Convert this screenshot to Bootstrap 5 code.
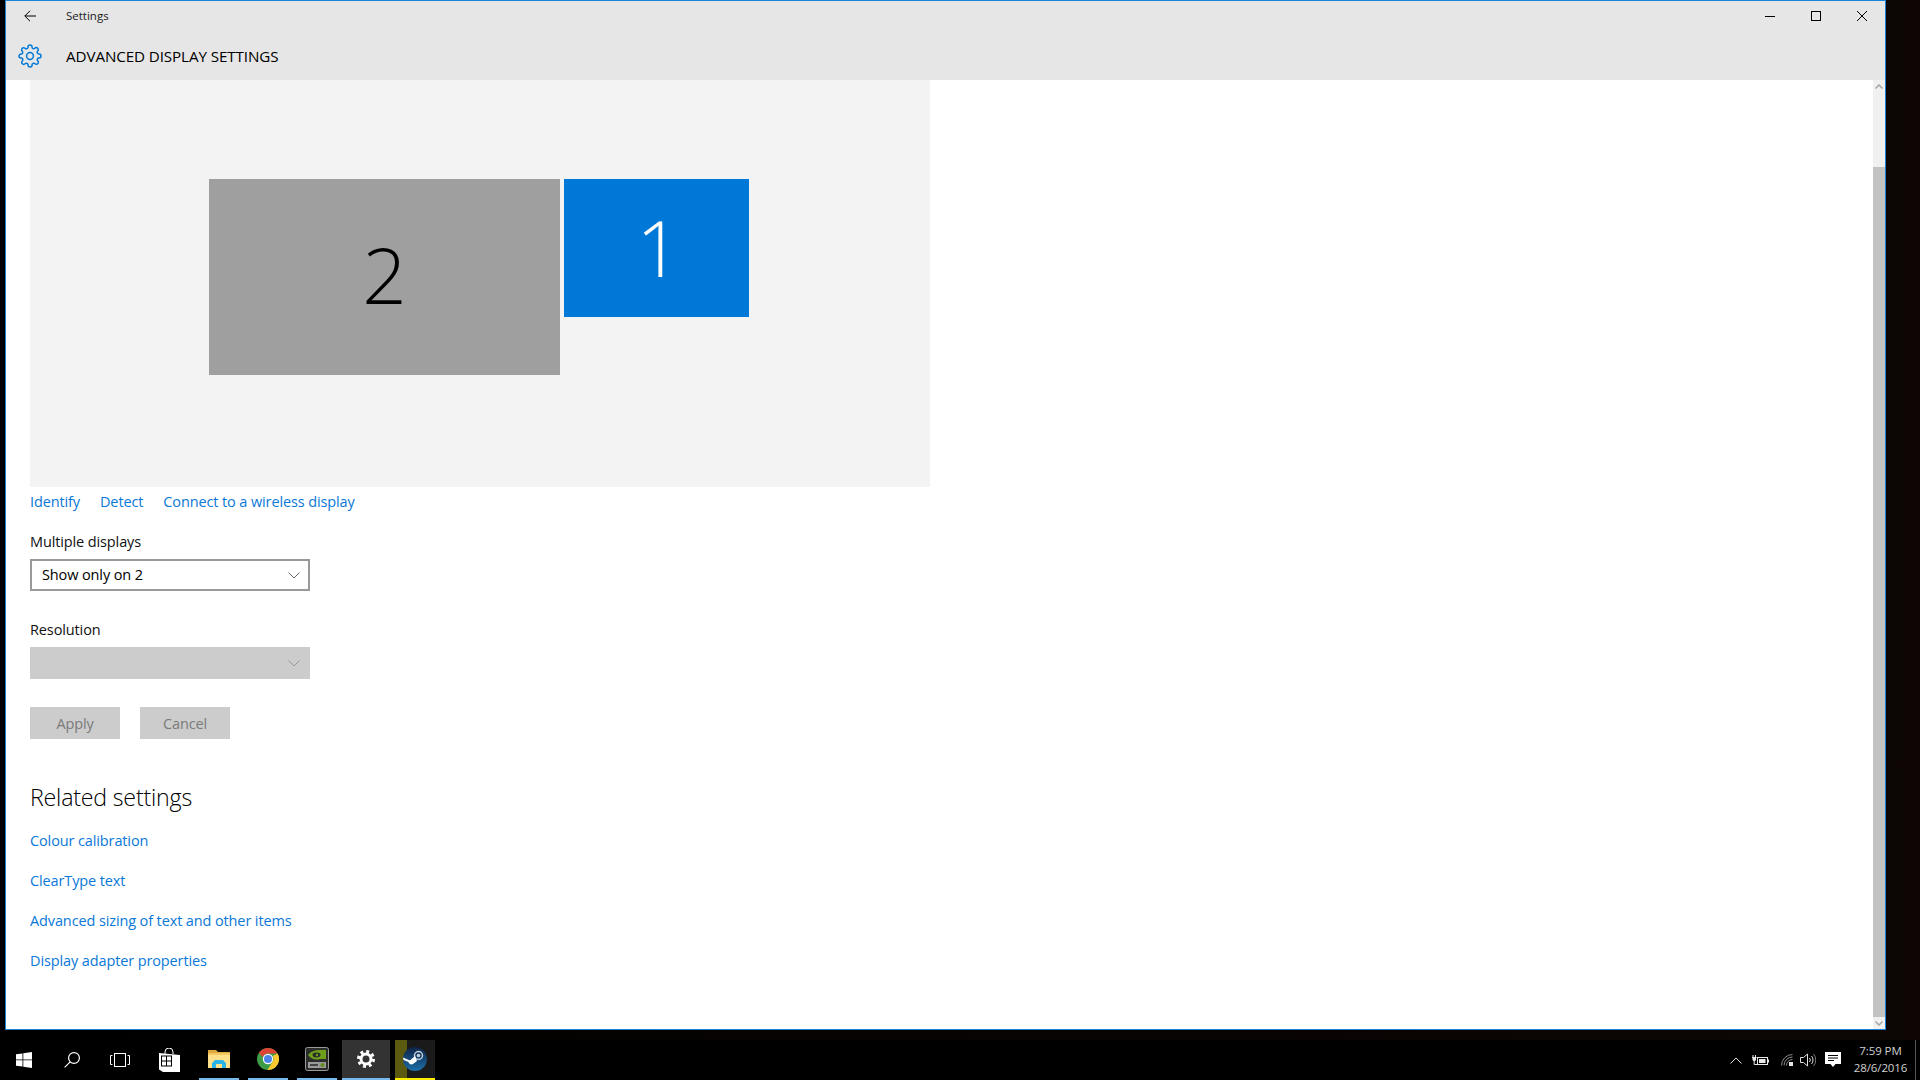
<!DOCTYPE html>
<html lang="en">
<head>
  <meta charset="UTF-8" />
  <meta name="viewport" content="width=device-width, initial-scale=1" />
  <title>Settings</title>
  <link href="https://cdn.jsdelivr.net/npm/bootstrap@5.3.3/dist/css/bootstrap.min.css" rel="stylesheet" />
  <style>
    html, body { height: 100%; }
    body { background: linear-gradient(90deg, #000 0, #060302 40%, #0d0604 100%); overflow: hidden; font-family: "Open Sans", "Liberation Sans", sans-serif; font-size: 14.5px; color: #111; }
    svg { display: block; }
    .screen { width: 1920px; height: 1080px; }
    .app-window { width: 1881px; height: 1030px; margin-left: 5px; background: #fff; border: 1px solid #1883d7; overflow: hidden; }

    .title-bar { height: 79px; background: #e6e6e6; flex: none; }
    .title-top { height: 29px; }
    .title-bottom { height: 50px; padding-top: 2px; }
    .back-slot { width: 60px; padding-left: 18px; }
    .app-name { font-size: 11.5px; color: #1a1a1a; }
    .page-name { font-size: 15.2px; font-weight: 500; letter-spacing: -.1px; color: #000; }
    .gear-slot { width: 60px; padding-left: 12px; }
    .win-btn { width: 46px; height: 29px; }

    .scroll-track { width: 12px; background: #f0f0f0; flex: none; }
    .scroll-cap { height: 12px; flex: none; }
    .scroll-gap { height: 75px; flex: none; }
    .scroll-thumb { background: #c2c2c2; flex: 1; }

    .page-body { padding-left: 24px; }
    .preview { width: 900px; height: 407px; background: #f3f3f3; padding: 99px 0 0 179px; gap: 4px; }
    .monitor { font-weight: 300; font-size: 78px; line-height: 1; }
    .mon-two { width: 351px; height: 196px; background: #9f9f9f; color: #000; padding-bottom: 6px; }
    .mon-one { width: 185px; height: 138px; background: #0078d7; color: #fff; padding: 0 0 2px 4px; }

    .link-row { height: 30px; gap: 20px; }
    .ms-link { color: #0a78d7; text-decoration: none; letter-spacing: -.12px; }
    .field-label { height: 24px; margin-bottom: 6px; margin-top: 12px; padding-top: 2px; letter-spacing: -.12px; }
    .field-label.second { margin-top: 27px; margin-bottom: 5px; padding-top: 0; }
    .combo { width: 280px; height: 32px; padding: 0 8px 0 10px; border: 2px solid #999; background: #fff; letter-spacing: -.12px; color: #000; }
    .combo.off { border-color: #ccc; background: #ccc; }
    .action-row { margin-top: 28px; gap: 20px; }
    .flat-btn, .flat-btn:disabled { width: 90px; height: 32px; padding: 1px 0 0; background: #ccc; color: #7a7a7a; border: 0; opacity: 1; font-size: 14.5px; letter-spacing: -.12px; }
    .section-title { font-size: 23.2px; font-weight: 300; height: 34px; line-height: 34px; margin: 41px 0 7px; color: #000; letter-spacing: -.2px; }
    .related-row { height: 40px; }

    .task-bar { height: 40px; background: #000; margin-top: auto; flex: none; }
    .tb-slot { width: 48px; height: 40px; }
    .tb-store { width: 50px; }
    .tb-app { width: 40px; height: 40px; border-bottom: 2px solid #76b9ed; flex: none; }
    .tb-explorer { margin-left: 5px; }
    .tb-chrome { margin-left: 9px; }
    .tb-nvidia { margin-left: 9px; }
    .tb-settings { margin-left: 5px; width: 48px; background: #333; }
    .tb-steam { margin-left: 5px; background: linear-gradient(90deg, #5c5a10 0, #5c5a10 12px, #1a1a1a 12px); border-bottom-color: #ffee00; }
    .tray-slot { height: 40px; flex: none; }
    .clock { width: 67px; color: #d0d0d0; font-size: 11.5px; line-height: 17px; text-align: center; letter-spacing: -.1px; padding: 0 2px 2px 0; }
    .show-desktop { width: 5px; height: 40px; border-left: 1px solid #555; }
  </style>
</head>
<body>
  <div class="screen d-flex flex-column">

    <!-- Settings window -->
    <div class="app-window d-flex flex-column">
      <div class="title-bar">
        <div class="title-top d-flex align-items-center">
          <div class="back-slot">
            <svg width="12" height="12" viewBox="0 0 12 12" fill="none" stroke="#000" stroke-width="1"><path d="M12 6H.8M6 .8 .8 6 6 11.2"/></svg>
          </div>
          <span class="app-name">Settings</span>
          <div class="ms-auto d-flex">
            <div class="win-btn d-flex align-items-center justify-content-center">
              <svg width="10" height="10" viewBox="0 0 10 10" stroke="#000" stroke-width="1"><path d="M0 5.500h10"/></svg>
            </div>
            <div class="win-btn d-flex align-items-center justify-content-center">
              <svg width="10" height="10" viewBox="0 0 10 10" fill="none" stroke="#000" stroke-width="1"><rect x=".5" y=".5" width="9" height="9"/></svg>
            </div>
            <div class="win-btn d-flex align-items-center justify-content-center">
              <svg width="10" height="10" viewBox="0 0 10 10" stroke="#000" stroke-width="1"><path d="M0 0l10 10M10 0 0 10"/></svg>
            </div>
          </div>
        </div>
        <div class="title-bottom d-flex align-items-center">
          <div class="gear-slot">
            <svg width="24" height="24" viewBox="0 0 24 24" fill="none" stroke="#0078d7" stroke-width="1.5"><circle cx="12" cy="12" r="3.400"/><path d="M19.400 15a1.650 1.650 0 0 0 .33 1.820l.06.06a2 2 0 0 1 0 2.830 2 2 0 0 1-2.830 0l-.06-.06a1.650 1.650 0 0 0-1.820-.33 1.650 1.650 0 0 0-1 1.510V21a2 2 0 0 1-2 2 2 2 0 0 1-2-2v-.09A1.650 1.650 0 0 0 9 19.400a1.650 1.650 0 0 0-1.820.33l-.06.06a2 2 0 0 1-2.830 0 2 2 0 0 1 0-2.830l.06-.06a1.650 1.650 0 0 0 .33-1.820 1.650 1.650 0 0 0-1.510-1H3a2 2 0 0 1-2-2 2 2 0 0 1 2-2h.09A1.650 1.650 0 0 0 4.600 9a1.650 1.650 0 0 0-.33-1.820l-.06-.06a2 2 0 0 1 0-2.830 2 2 0 0 1 2.830 0l.06.06a1.650 1.650 0 0 0 1.820.33H9a1.650 1.650 0 0 0 1-1.510V3a2 2 0 0 1 2-2 2 2 0 0 1 2 2v.09a1.650 1.650 0 0 0 1 1.510 1.650 1.650 0 0 0 1.820-.33l.06-.06a2 2 0 0 1 2.830 0 2 2 0 0 1 0 2.830l-.06.06a1.650 1.650 0 0 0-.33 1.820V9a1.650 1.650 0 0 0 1.510 1H21a2 2 0 0 1 2 2 2 2 0 0 1-2 2h-.09a1.650 1.650 0 0 0-1.510 1z"/></svg>
          </div>
          <span class="page-name">ADVANCED DISPLAY SETTINGS</span>
        </div>
      </div>

      <div class="d-flex flex-grow-1 overflow-hidden">
        <div class="page-body flex-grow-1">
          <div class="preview d-flex align-items-start">
            <div class="monitor mon-two d-flex align-items-center justify-content-center">2</div>
            <div class="monitor mon-one d-flex align-items-center justify-content-center">1</div>
          </div>

          <div class="link-row d-flex align-items-center">
            <a class="ms-link" href="#">Identify</a>
            <a class="ms-link" href="#">Detect</a>
            <a class="ms-link" href="#">Connect to a wireless display</a>
          </div>

          <div class="field-label d-flex align-items-center">Multiple displays</div>
          <div class="combo d-flex align-items-center justify-content-between">
            <span>Show only on 2</span>
            <svg width="12" height="7" viewBox="0 0 12 7" fill="none" stroke="#666" stroke-width="1"><path d="M.5.5 6 6l5.500-5.500"/></svg>
          </div>

          <div class="field-label second d-flex align-items-center">Resolution</div>
          <div class="combo off d-flex align-items-center justify-content-end">
            <svg width="12" height="7" viewBox="0 0 12 7" fill="none" stroke="#999" stroke-width="1"><path d="M.5.5 6 6l5.500-5.500"/></svg>
          </div>

          <div class="action-row d-flex">
            <button class="btn rounded-0 flat-btn" disabled>Apply</button>
            <button class="btn rounded-0 flat-btn" disabled>Cancel</button>
          </div>

          <h2 class="section-title">Related settings</h2>
          <div class="related-row d-flex align-items-center"><a class="ms-link" href="#">Colour calibration</a></div>
          <div class="related-row d-flex align-items-center"><a class="ms-link" href="#">ClearType text</a></div>
          <div class="related-row d-flex align-items-center"><a class="ms-link" href="#">Advanced sizing of text and other items</a></div>
          <div class="related-row d-flex align-items-center"><a class="ms-link" href="#">Display adapter properties</a></div>
        </div>

        <div class="scroll-track d-flex flex-column">
          <div class="scroll-cap d-flex align-items-center justify-content-center">
            <svg width="8" height="5" viewBox="0 0 8 5" fill="none" stroke="#a6a6a6" stroke-width="1.5"><path d="M.5 4.500 4 1l3.500 3.500"/></svg>
          </div>
          <div class="scroll-gap"></div>
          <div class="scroll-thumb"></div>
          <div class="scroll-cap d-flex align-items-center justify-content-center">
            <svg width="8" height="5" viewBox="0 0 8 5" fill="none" stroke="#a6a6a6" stroke-width="1.5"><path d="M.5.5 4 4 7.500.5"/></svg>
          </div>
        </div>
      </div>
    </div>

    <!-- Taskbar -->
    <div class="task-bar d-flex">
      <div class="tb-slot d-flex align-items-center justify-content-center">
        <svg width="16" height="16" viewBox="0 0 16 16" fill="#fff"><path d="M0 2.300 6.500 1.400V7.500H0zM7.300 1.300 16 0V7.500H7.300zM0 8.300H6.500V14.600L0 13.700zM7.300 8.300H16V16L7.300 14.700z"/></svg>
      </div>
      <div class="tb-slot d-flex align-items-center justify-content-center">
        <svg width="16" height="16" viewBox="0 0 16 16" fill="none" stroke="#fff" stroke-width="1.200"><circle cx="10" cy="6" r="5.400"/><path d="M6.200 9.800.6 15.400"/></svg>
      </div>
      <div class="tb-slot d-flex align-items-center justify-content-center">
        <svg width="20" height="14" viewBox="0 0 20 14" fill="none" stroke="#fff" stroke-width="1"><rect x="4.500" y=".5" width="11" height="13"/><path d="M2.500 2.500H.5v9h2M17.500 2.500h2v9h-2"/></svg>
      </div>
      <div class="tb-slot tb-store d-flex align-items-center justify-content-center">
        <svg width="21" height="24" viewBox="0 0 21 24"><path fill="none" stroke="#fff" stroke-width="1" d="M6 6V4a4 4 0 0 1 8 0v2"/><path fill="#fff" d="M0 5 21 7v17H4L0 21.500z"/><path fill="#000" d="M2 7.500h11v11H2z"/><path fill="#fff" d="M3 8.500h4v4H3zM8 8.500h4v4H8zM3 13.500h4v4H3zM8 13.500h4v4H8z"/></svg>
      </div>
      <div class="tb-app tb-explorer d-flex align-items-center justify-content-center">
        <svg width="22" height="18" viewBox="0 0 22 18"><path fill="#e0a93f" d="M0 0h8l2 2h12v3H0z"/><path fill="#ffe08a" d="M0 3h22v15H0z"/><path fill="#f2c860" d="M0 3h22v2H0z"/><path fill="#2ab3e6" d="M4 18v-5l3-3h8l3 3v5h-4v-4H8v4z"/></svg>
      </div>
      <div class="tb-app tb-chrome d-flex align-items-center justify-content-center">
        <svg width="22" height="22" viewBox="0 0 22 22">
          <circle cx="11" cy="11" r="11" fill="#3f9c46"/>
          <path fill="#dd4235" d="M2 4.700A11 11 0 0 1 20.500 5.500H11a5.500 5.500 0 0 0-5.200 3.700z"/>
          <path fill="#fbc92f" d="M20.500 5.500A11 11 0 0 1 10.500 22l4.600-7.400a5.500 5.500 0 0 0 .6-6.600z"/>
          <circle cx="11" cy="11" r="5.200" fill="#fff"/>
          <circle cx="11" cy="11" r="4" fill="#4a84e8"/>
        </svg>
      </div>
      <div class="tb-app tb-nvidia d-flex align-items-center justify-content-center">
        <svg width="24" height="24" viewBox="0 0 24 24">
          <rect x=".5" y=".5" width="23" height="23" rx="2" fill="#2a2d2a" stroke="#9a9a9a"/>
          <path fill="#6f9e1a" d="M3 8c3-4 8-5 12-5h6v9h-6c-4 1-8 1-12-4z"/>
          <ellipse cx="11.500" cy="8" rx="4" ry="2.400" fill="#2a2d2a"/>
          <circle cx="12" cy="8" r="1.200" fill="#6f9e1a"/>
          <rect x="3" y="15" width="18" height="6" fill="#9a9a9a"/>
          <rect x="5" y="17" width="8" height="2" fill="#444"/>
          <circle cx="17.500" cy="18" r="2" fill="#5f8f1a"/>
        </svg>
      </div>
      <div class="tb-app tb-settings d-flex align-items-center justify-content-center">
        <svg width="18" height="18" viewBox="0 0 18 18" fill="none" stroke="#fff"><circle cx="9" cy="9" r="5" stroke-width="3"/><circle cx="9" cy="9" r="7.500" stroke-width="3" stroke-dasharray="2.950 2.940"/></svg>
      </div>
      <div class="tb-app tb-steam d-flex align-items-center justify-content-center">
        <svg width="24" height="24" viewBox="0 0 24 24">
          <defs><linearGradient id="steamFill" x1="0" y1="0" x2="0" y2="1"><stop offset="0" stop-color="#0f2247"/><stop offset="1" stop-color="#1c6fa8"/></linearGradient></defs>
          <circle cx="12" cy="12" r="12" fill="url(#steamFill)"/>
          <circle cx="15.500" cy="8.500" r="4" fill="none" stroke="#c4ccd4" stroke-width="1.500"/>
          <circle cx="15.500" cy="8.500" r="1.800" fill="#c4ccd4"/>
          <path fill="#fff" d="M0 10.500l7 3 5-4.500 2 5-4 3c-2 1-4 0-4.500-2L.5 13z"/>
        </svg>
      </div>

      <div class="ms-auto d-flex">
        <div class="tray-slot d-flex align-items-center justify-content-center" style="width:24px">
          <svg width="12" height="7" viewBox="0 0 12 7" fill="none" stroke="#e0e0e0" stroke-width="1"><path d="M.5 6.500 6 1l5.500 5.500"/></svg>
        </div>
        <div class="tray-slot d-flex align-items-center justify-content-center" style="width:25px">
          <svg width="17" height="11" viewBox="0 0 17 11"><path fill="none" stroke="#e8e8e8" d="M1 0v2.500M3.500 0v2.500M0 2.500h4.500M2.200 6v3.500h3"/><path fill="#e8e8e8" d="M.5 2.500h3.500v2a1.750 1.750 0 0 1-3.500 0z"/><rect x="5.500" y="2.500" width="10" height="7" fill="none" stroke="#e8e8e8"/><rect x="7" y="4" width="6.500" height="4" fill="#e8e8e8"/><rect x="16" y="4.500" width="1" height="3" fill="#e8e8e8"/></svg>
        </div>
        <div class="tray-slot d-flex align-items-center justify-content-center" style="width:25px;padding-left:3px">
          <svg width="13" height="12" viewBox="0 0 13 12" fill="none" stroke="#8c8c8c" stroke-width="1"><path d="M.5 11.500a11 11 0 0 1 11-11M3 11.500a8.500 8.500 0 0 1 8.500-8.500M5.500 11.500a6 6 0 0 1 6-6"/><rect x="8" y="8" width="4" height="4" fill="#e8e8e8" stroke="none"/></svg>
        </div>
        <div class="tray-slot d-flex align-items-center justify-content-center" style="width:20px">
          <svg width="16" height="14" viewBox="0 0 16 14" fill="none" stroke="#e0e0e0" stroke-width="1"><path d="M.5 4.500h3L7.500 1v12l-4-3.500h-3z"/><path d="M9.500 5a3 3 0 0 1 0 4M11.500 3a6 6 0 0 1 0 8"/><path stroke="#777" d="M13.500 1a9 9 0 0 1 0 12"/></svg>
        </div>
        <div class="tray-slot d-flex align-items-center justify-content-center" style="width:30px">
          <svg width="16" height="16" viewBox="0 0 16 16"><path fill="#fff" d="M0 0h16v12h-5.500L8 15l-2.500-3H0z"/><path stroke="#000" d="M3 3.500h10M3 6h10M3 8.500h6"/></svg>
        </div>
        <div class="tray-slot clock d-flex flex-column justify-content-center">
          <div>7:59 PM</div>
          <div>28/6/2016</div>
        </div>
        <div class="show-desktop"></div>
      </div>
    </div>
  </div>

  <script src="https://cdn.jsdelivr.net/npm/bootstrap@5.3.3/dist/js/bootstrap.bundle.min.js"></script>
</body>
</html>
